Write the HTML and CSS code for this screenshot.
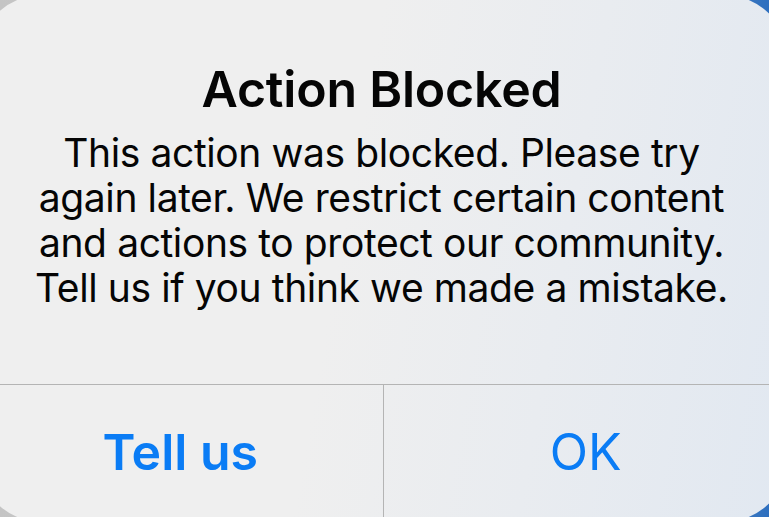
FILE: index.html
```html
<!DOCTYPE html>
<html lang="en">
<head>
  <meta charset="UTF-8">
  <meta name="viewport" content="width=device-width, initial-scale=1.0">
  <title>Action Blocked</title>
  <link rel="stylesheet" href="styles.css">
</head>
<body>
  <div class="alert">
    <div class="alert-body">
      <h1 class="alert-title">Action Blocked</h1>
      <p class="alert-message">This action was blocked. Please try again later. We restrict certain content and actions to protect our community. Tell us if you think we made a mistake.</p>
    </div>
    <div class="alert-actions">
      <button class="alert-btn alert-btn-bold">Tell us</button>
      <button class="alert-btn">OK</button>
    </div>
  </div>
</body>
</html>
```

FILE: styles.css
```css
html, body {
  margin: 0;
  padding: 0;
  height: 100%;
  overflow: hidden;
}
body {
  background: linear-gradient(90deg, #c4c4c4 0%, #cfcfcf 30%, #a9b3bf 70%, #2d6fbf 100%);
  font-family: Inter, "Noto Sans", sans-serif;
}
.alert {
  height: 527px;
  margin: -5px -19px 0 -22px;
  border-radius: 64px;
  background: linear-gradient(100deg, #efefef 0%, #efefef 45%, #e9ecf0 70%, #e1e8f1 100%);
  display: flex;
  flex-direction: column;
  overflow: hidden;
}
.alert-body {
  padding: 64px 52px 0 49px;
  height: 325px;
  text-align: center;
  color: #050505;
}
.alert-title {
  margin: 0;
  font-size: 50px;
  line-height: 60px;
  font-weight: 600;
  letter-spacing: -0.2px;
}
.alert-message {
  margin: 11px 0 0;
  font-size: 39px;
  line-height: 45px;
  font-weight: 400;
  letter-spacing: -0.4px;
}
.alert-actions {
  display: flex;
  border-top: 1px solid #b4b4b4;
  flex: 1;
}
.alert-btn {
  flex: 1;
  border: 0;
  background: none;
  font-family: inherit;
  font-size: 50px;
  line-height: 60px;
  color: #0a7cf5;
  padding: 37px 0 0;
  display: flex;
  justify-content: center;
  align-items: flex-start;
}
.alert-btn + .alert-btn {
  border-left: 1px solid #b4b4b4;
}
.alert-btn-bold {
  font-weight: 600;
}
```
